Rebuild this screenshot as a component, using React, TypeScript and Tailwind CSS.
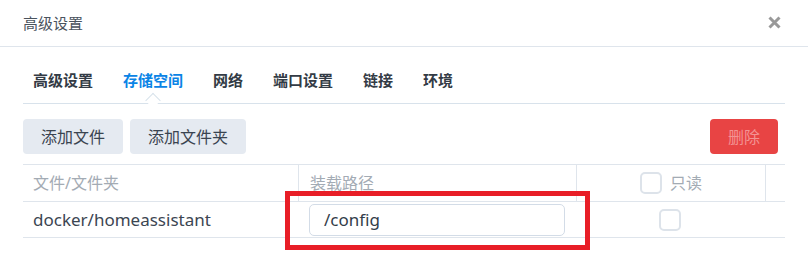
const TABS = ["高级设置", "存储空间", "网络", "端口设置", "链接", "环境"];
const ACTIVE = 1;

function Checkbox() {
  return <span className="inline-block h-[22px] w-[22px] rounded-[5px] border-2 border-[#dde3ea] bg-white" />;
}

export default function App() {
  return (
    <div
      className="relative h-[263px] w-[808px] overflow-hidden bg-white text-[#404a56]"
      style={{ fontFamily: '"Noto Sans", "Noto Sans CJK SC", sans-serif' }}
    >
      {/* header */}
      <div className="flex h-[47px] items-center justify-between border-b border-[#dfe5ec] pl-[23px] pr-[27px]">
        <span className="text-[15px] leading-none text-[#4a535d]">高级设置</span>
        <svg width="13" height="13" viewBox="0 0 13 13" className="mt-[-1px]">
          <path d="M1.5 1.5 L11.5 11.5 M11.5 1.5 L1.5 11.5" stroke="#999" strokeWidth="3" strokeLinecap="butt" />
        </svg>
      </div>

      <div className="px-[23px]">
        {/* tabs */}
        <div className="relative flex h-[57px] items-center gap-[30px] border-b border-[#d8e2eb] pl-[10px]">
          {TABS.map((t, i) => (
            <div
              key={t}
              className={
                "relative pt-[10px] text-[15px] font-semibold leading-none " +
                (i === ACTIVE ? "text-[#0a84e6]" : "text-[#333b45]")
              }
            >
              {t}
              {i === ACTIVE && (
                <span className="absolute left-1/2 top-[32px] h-[11px] w-[11px] -translate-x-1/2 rotate-45 border-l border-t border-[#d8e2eb] bg-white" />
              )}
            </div>
          ))}
        </div>

        {/* toolbar */}
        <div className="mt-[15px] flex items-center justify-between pr-[7px]">
          <div className="flex gap-[7px]">
            <button className="h-[35px] w-[100px] rounded-[4px] bg-[#e5eaf1] text-[16px] text-[#3a4450]">添加文件</button>
            <button className="h-[35px] w-[116px] rounded-[4px] bg-[#e5eaf1] text-[16px] text-[#3a4450]">添加文件夹</button>
          </div>
          <button className="h-[35px] w-[68px] rounded-[4px] bg-[#e84444] text-[16px] text-[#f39393]">删除</button>
        </div>

        {/* table */}
        <div className="mt-[10px] w-[762px] border-t border-[#dfe5ec] text-[16px]">
          <div className="grid h-[37px] grid-cols-[275px_278px_189px_20px] border-b border-[#dfe5ec] text-[#a3abb4]">
            <div className="flex items-center pl-[10px]">文件/文件夹</div>
            <div className="flex items-center border-l border-[#dfe5ec] pl-[11px]">装载路径</div>
            <div className="flex items-center justify-center gap-[8px] border-l border-[#dfe5ec]">
              <Checkbox />
              <span>只读</span>
            </div>
            <div className="border-l border-[#dfe5ec]" />
          </div>
          <div className="grid h-[36px] grid-cols-[275px_278px_189px_20px] border-b border-[#dfe5ec] text-[17px]">
            <div className="flex items-center pl-[10px] text-[#3c4652]">docker/homeassistant</div>
            <div className="flex items-center px-[11px]">
              <div className="flex h-[32px] w-full items-center rounded-[5px] border border-[#d3dce7] pl-[14px] text-[#333d4a]">
                /config
              </div>
            </div>
            <div className="flex items-center justify-center pr-[2px]">
              <Checkbox />
            </div>
            <div />
          </div>
        </div>
      </div>

      {/* annotation */}
      <div className="pointer-events-none absolute left-[285px] top-[191px] h-[59px] w-[305px] border-[5px] border-[#e81e27]" />
    </div>
  );
}
